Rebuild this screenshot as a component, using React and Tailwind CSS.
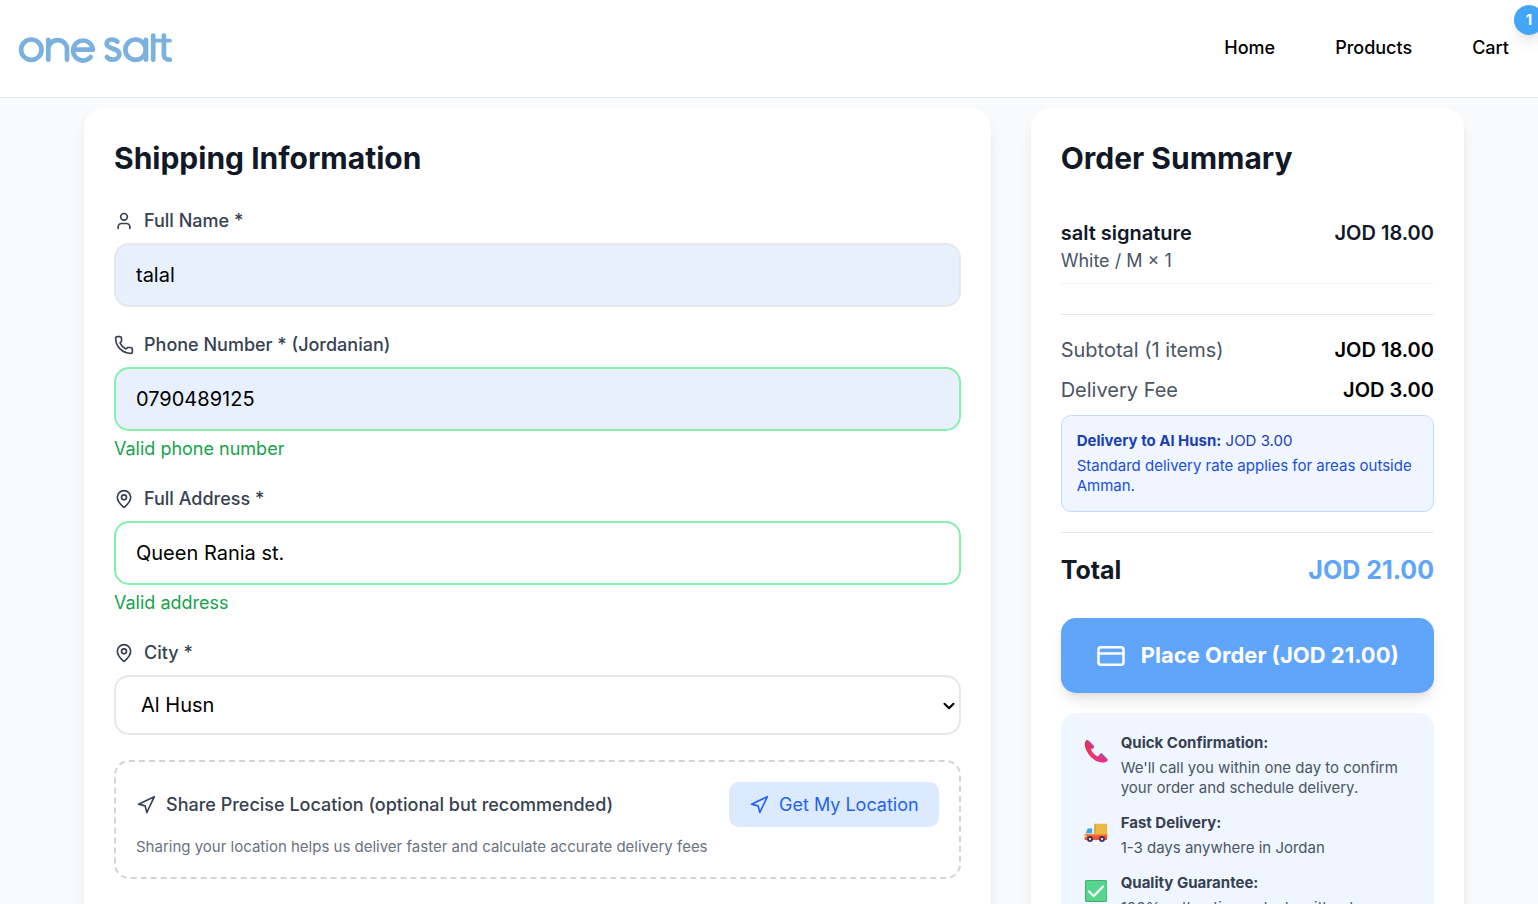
import React from "react";
import { User, Phone, MapPin, Navigation, CreditCard, ChevronDown } from "lucide-react";

function Logo() {
  return (
    <svg
      role="img"
      aria-label="one salt"
      viewBox="0 0 156 32"
      className="h-8 w-[156px]"
      fill="none"
      stroke="#7ab1df"
      strokeWidth="4.7"
      strokeLinecap="round"
      strokeLinejoin="round"
    >
      <circle cx="13.3" cy="17.7" r="10.2" />
      <path d="M30.3 27.7V7.9M30.3 17a9.3 8.8 0 0 1 18.7 0V27.7" />
      <path d="M56 17.7h18.9a9.9 10 0 1 0-2.3 7.3" />
      <path d="M99.4 9.8c-1.4-1.6-3.600-2.400-5.700-2.300-3.100.1-5.100 2-5.100 4.300 0 5.500 12.700 3.900 12.700 10.500 0 3.200-2.900 5.400-6.400 5.400-2.600 0-4.700-1-6-2.700" />
      <circle cx="117.6" cy="17.7" r="10.2" />
      <path d="M128 7.9v19.8M135.2 3.6V27.7M145.9 3.600v18.900c0 3.300 1.900 5.300 5.900 5.200" />
      <path d="M136 8.7h16" strokeWidth="3.8" />
    </svg>
  );
}

function Field({ id, icon: Icon, label, hint, children }) {
  return (
    <div>
      <label htmlFor={id} className="mb-2.5 flex items-center gap-2.5 text-[18px] leading-[25px] font-medium text-[#374151]">
        <Icon className="size-5" />
        {label}
      </label>
      {children}
      {hint && <p className="mt-[5px] text-[18px] leading-[25px] text-[#16a34a]">{hint}</p>}
    </div>
  );
}

function PhoneReceiver() {
  return (
    <svg viewBox="0 0 24 24" className="size-6" aria-hidden="true">
      <defs>
        <linearGradient id="receiver" x1="0" y1="0" x2="1" y2="1">
          <stop offset="0" stopColor="#e5264a" />
          <stop offset="0.5" stopColor="#ee3a66" />
          <stop offset="1" stopColor="#e02aa0" />
        </linearGradient>
      </defs>
      <path d="M2.300 1.300C.4 3 .3 6.500 2 10.500c2.500 5.700 6.500 10 11.500 12 4 1.500 8 1.300 9.700-.5.500-.6.400-1.300-.1-1.800l-5-5c-.6-.6-1.400-.6-2 0l-1.700 1.700c-.5.500-1.200.500-1.800.1-2-1.400-4-3.500-5.200-5.400-.4-.6-.3-1.200.2-1.700L9.300 8.200c.6-.6.600-1.300 0-1.900L4.500 1.400c-.6-.6-1.500-.7-2.200-.1Z" fill="url(#receiver)" />
      <path d="M3.600.9 10 7.300c.4.400.400.900 0 1.300L8.700 9.900 2.300 2.700Z" fill="#b04a9c" />
      <path d="m16 14.800.9-.4c.4-.2.900-.1 1.200.2l5.200 5.300c.5.500.5 1.200 0 1.800L15 16.400Z" fill="#b04a9c" />
    </svg>
  );
}

function Truck() {
  return (
    <svg viewBox="0 -2 24 24" className="size-6" aria-hidden="true">
      <path d="M2.800 8.600C3.100 7.500 3.700 7 4.700 7H11v9H.8v-3.200Z" fill="#e4e0ec" />
      <path d="M3.300 8.600c.2-.7.600-1 1.300-1H8v4.600H2Z" fill="#35a8ea" />
      <rect x="10.500" y="2.800" width="12.700" height="13" rx="1" fill="#e9b944" />
      <rect x="10.500" y="2.800" width="1.200" height="13" fill="#d59a37" />
      <path d="M.8 13h22.400v5.200c0 .4-.4.800-.8.800H1.400a.8.800 0 0 1-.8-.8Z" fill="#f4572c" />
      <path d="M.8 13h22.400v1.400H.8Z" fill="#fb8b3c" />
      <path d="M.7 14h1.800v2.400H.6Z" fill="#ffd25a" />
      <circle cx="6" cy="18" r="3" fill="#45305c" />
      <circle cx="6" cy="18" r="1.200" fill="#d9d2e3" />
      <circle cx="18" cy="18" r="3" fill="#45305c" />
      <circle cx="18" cy="18" r="1.200" fill="#d9d2e3" />
    </svg>
  );
}

function CheckBadge() {
  return (
    <svg viewBox="0 0 24 24" className="size-6" aria-hidden="true">
      <rect x="1" y="1" width="22" height="22" rx="1.500" fill="#3fae73" />
      <rect x="2" y="2" width="20.500" height="20" rx="1.200" fill="#55d68c" />
      <path d="m5 12.500 4.800 4.600L19 7.500" fill="none" stroke="#fff" strokeWidth="2.200" strokeLinecap="round" strokeLinejoin="round" />
    </svg>
  );
}

function Assurance({ icon: Icon, title, children }) {
  return (
    <li className="flex gap-2.5">
      <span className="flex w-[30px] shrink-0 justify-center pt-1.5">
        <Icon />
      </span>
      <div className="text-[15px] leading-5">
        <p className="font-bold text-[#374151]">{title}</p>
        <p className="mt-[5px] text-[#4b5563]">{children}</p>
      </div>
    </li>
  );
}

const INPUT = "h-16 w-full rounded-[15px] border-2 px-5 text-[20px] text-black outline-none";

export default function App() {
  return (
    <div className="flex h-screen flex-col overflow-hidden bg-[#f9fafb] font-['Inter',sans-serif] text-black">
      <header className="flex h-[98px] shrink-0 items-center justify-between border-b border-[#e5e7eb] bg-white pr-[29px] pb-0.5 pl-[18px]">
        <a href="#home" className="block">
          <Logo />
        </a>
        <nav className="flex items-center gap-[60px] text-[18px] leading-[25px] font-medium">
          <a href="#home">Home</a>
          <a href="#products">Products</a>
          <a href="#cart" className="relative">
            Cart
            <span className="absolute -top-[30px] left-full ml-[5px] flex size-[30px] items-center justify-center rounded-full bg-[#42a5f5] text-[15px] leading-5 font-bold text-white shadow-lg">
              1
            </span>
          </a>
        </nav>
      </header>

      <main className="flex-1 overflow-y-auto pt-2.5 pr-[74px] pl-[84px] [scrollbar-width:none]">
        <div className="mx-auto grid max-w-[1520px] grid-cols-1 gap-10 lg:grid-cols-3">
          <section className="rounded-[20px] bg-white p-[30px] shadow-lg lg:col-span-2">
            <h2 className="mb-[30px] text-[30px] leading-10 font-bold text-[#111827]">Shipping Information</h2>
            <form className="flex flex-col gap-[25px]">
              <Field id="name" icon={User} label="Full Name *">
                <input id="name" type="text" defaultValue="talal" className={`${INPUT} border-[#e5e7eb] bg-[#e8f0fe]`} />
              </Field>
              <Field id="phone" icon={Phone} label="Phone Number * (Jordanian)" hint="Valid phone number">
                <input id="phone" type="tel" defaultValue="0790489125" className={`${INPUT} border-[#86efac] bg-[#e8f0fe]`} />
              </Field>
              <Field id="address" icon={MapPin} label="Full Address *" hint="Valid address">
                <input id="address" type="text" defaultValue="Queen Rania st." className={`${INPUT} border-[#86efac] bg-white`} />
              </Field>
              <Field id="city" icon={MapPin} label="City *">
                <div className="relative">
                  <select id="city" defaultValue="Al Husn" className="block h-[60px] w-full appearance-none rounded-[15px] border-2 border-[#e5e7eb] bg-white pr-8 pl-[25px] text-[20px] text-black outline-none">
                    <option>Al Husn</option>
                    <option>Amman</option>
                    <option>Irbid</option>
                  </select>
                  <ChevronDown className="pointer-events-none absolute top-[22px] right-[3px] size-[18px]" strokeWidth={2.8} aria-hidden="true" />
                </div>
              </Field>
              <div className="rounded-[15px] border-2 border-dashed border-[#d1d5db] p-5">
                <div className="mb-2.5 flex items-center justify-between gap-5">
                  <p className="flex items-center gap-2.5 text-[18px] leading-[25px] font-medium text-[#374151]">
                    <Navigation className="size-5" />
                    Share Precise Location (optional but recommended)
                  </p>
                  <button type="button" className="flex items-center gap-2.5 rounded-[10px] bg-[#dbeafe] px-5 py-2.5 text-[18px] leading-[25px] text-[#2563eb]">
                    <Navigation className="size-5" />
                    Get My Location
                  </button>
                </div>
                <p className="text-[15px] leading-5 text-[#6b7280]">
                  Sharing your location helps us deliver faster and calculate accurate delivery fees
                </p>
              </div>
            </form>
          </section>

          <aside className="rounded-[20px] bg-white p-[30px] shadow-lg">
            <h2 className="mb-[30px] text-[30px] leading-10 font-bold text-[#111827]">Order Summary</h2>
            <div className="mb-[30px] flex justify-between border-b border-[#f3f4f6] py-2.5">
              <div>
                <p className="text-[20px] leading-[30px] font-semibold text-[#111827]">salt signature</p>
                <p className="text-[18px] leading-[25px] text-[#4b5563]">White / M × 1</p>
              </div>
              <p className="text-[20px] leading-[30px] font-semibold text-[#111827]">JOD 18.00</p>
            </div>
            <div className="border-t border-[#e5e7eb] pt-5 text-[20px] leading-[30px]">
              <div className="flex justify-between">
                <span className="text-[#4b5563]">Subtotal (1 items)</span>
                <span className="font-semibold">JOD 18.00</span>
              </div>
              <div className="mt-2.5 flex justify-between">
                <span className="text-[#4b5563]">Delivery Fee</span>
                <span className="font-semibold">JOD 3.00</span>
              </div>
            </div>
            <div className="mt-2.5 rounded-[10px] border border-[#bfdbfe] bg-[#eff6ff] p-[15px] text-[15px] leading-5">
              <p className="text-[#1e40af]">
                <strong className="font-bold">Delivery to Al Husn:</strong> JOD 3.00
              </p>
              <p className="mt-[5px] text-[#1d4ed8]">Standard delivery rate applies for areas outside Amman.</p>
            </div>
            <div className="mt-5 flex justify-between border-t border-[#e5e7eb] pt-5 text-[25px] leading-[35px] font-bold">
              <span className="text-[#111827]">Total</span>
              <span className="text-[#60a5fa]">JOD 21.00</span>
            </div>
            <button type="button" className="mt-[30px] flex h-[75px] w-full items-center justify-center gap-[15px] rounded-[15px] bg-[#60a5fa] text-[22px] leading-[35px] font-bold text-white shadow-lg">
              <CreditCard className="size-[30px]" />
              Place Order (JOD 21.00)
            </button>
            <ul className="mt-5 flex flex-col gap-[15px] rounded-[15px] bg-[#eff6ff] p-5">
              <Assurance icon={PhoneReceiver} title="Quick Confirmation:">
                We'll call you within one day to confirm your order and schedule delivery.
              </Assurance>
              <Assurance icon={Truck} title="Fast Delivery:">1-3 days anywhere in Jordan</Assurance>
              <Assurance icon={CheckBadge} title="Quality Guarantee:">
                100% authentic products without compromise.
              </Assurance>
            </ul>
          </aside>
        </div>
      </main>
    </div>
  );
}
